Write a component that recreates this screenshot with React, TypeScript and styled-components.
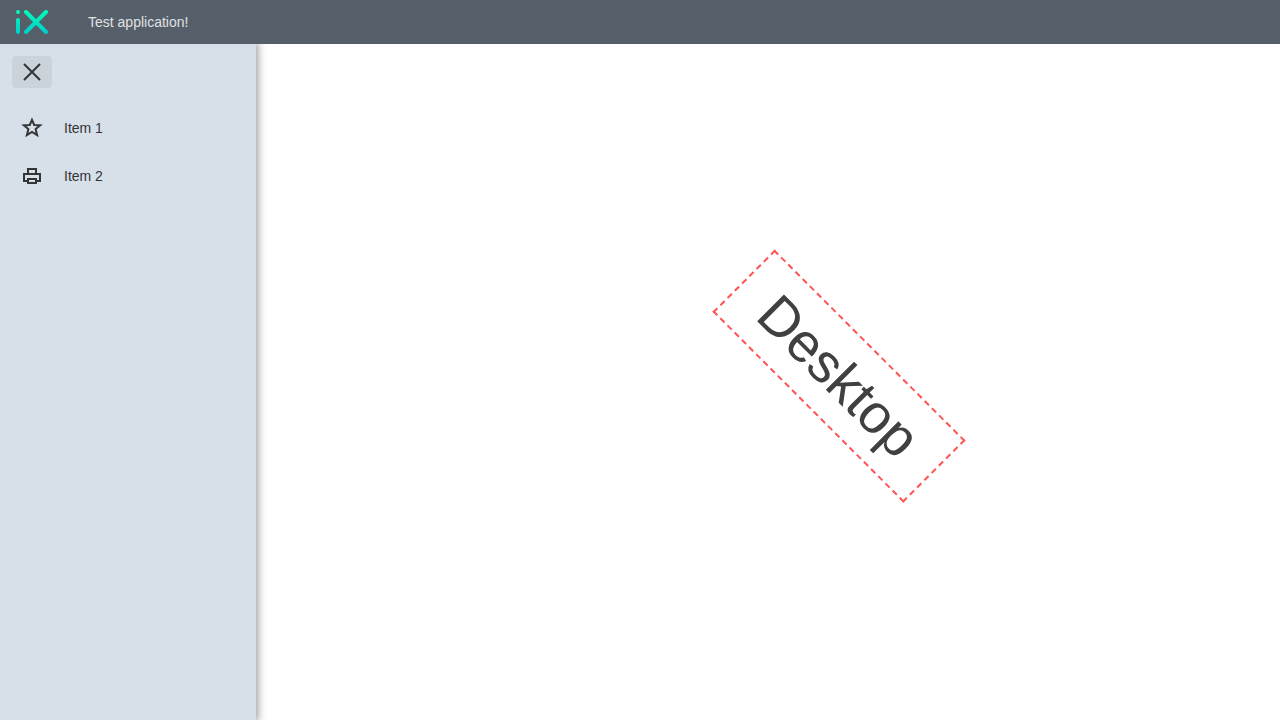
import React from 'react';
import styled, { createGlobalStyle } from 'styled-components';

const GlobalStyle = createGlobalStyle`
  * { box-sizing: border-box; }
  body {
    margin: 0;
    background: #ffffff;
    color: #333537;
    font-family: Arial, "Liberation Sans", sans-serif;
    font-size: 14px;
    line-height: 20px;
  }
`;

const Page = styled.div`
  display: flex;
  flex-direction: column;
  min-height: 100vh;
`;

const Header = styled.header`
  display: flex;
  align-items: center;
  gap: 40px;
  height: 44px;
  padding: 0 16px;
  background: #555f69;
  color: #e0e2e4;
  z-index: 2;
`;

const Title = styled.div`
  font-size: 14px;
`;

const Body = styled.div`
  display: flex;
  flex: 1;
`;

const Menu = styled.nav`
  flex: none;
  width: 256px;
  padding: 12px 0;
  background: #d7dfe8;
  box-shadow: 0 0 8px 2px rgba(0, 0, 0, 0.4);
  z-index: 1;
`;

const CloseButton = styled.button`
  display: flex;
  align-items: center;
  justify-content: center;
  width: 40px;
  height: 32px;
  margin: 0 12px 16px;
  padding: 0;
  border: 0;
  border-radius: 4px;
  background: #cad3da;
  color: inherit;
`;

const MenuItem = styled.button`
  display: flex;
  align-items: center;
  gap: 20px;
  width: 100%;
  height: 48px;
  padding: 0 20px;
  border: 0;
  background: transparent;
  color: inherit;
  font: inherit;
  text-align: left;
`;

const Content = styled.main`
  display: flex;
  flex: 1;
  align-items: center;
  justify-content: center;
  padding: 0 0 12px 142px;
`;

const Stamp = styled.div`
  padding: 32px;
  border: 2px dashed #ff5454;
  color: #404040;
  font-size: 55px;
  line-height: 20px;
  transform: rotate(45deg);
`;

const Logo = () => (
  <svg width="32" height="24" viewBox="0 0 32 24" role="img" aria-label="iX">
    <defs>
      <linearGradient id="logo" gradientUnits="userSpaceOnUse" x1="0" y1="0" x2="0" y2="24">
        <stop offset="0" stopColor="#00ffb9" />
        <stop offset="1" stopColor="#00cccc" />
      </linearGradient>
    </defs>
    <circle cx="2" cy="2" r="2" fill="url(#logo)" />
    <rect x="0" y="8" width="4" height="16" rx="2" fill="url(#logo)" />
    <path d="M10 2L30 22M30 2L10 22" stroke="url(#logo)" strokeWidth="4" strokeLinecap="round" />
  </svg>
);

const Icon = ({ children }: { children: React.ReactNode }) => (
  <svg width="24" height="24" viewBox="0 0 24 24" fill="none" stroke="currentColor" strokeWidth="2" aria-hidden="true">
    {children}
  </svg>
);

export default function App() {
  return (
    <Page>
      <GlobalStyle />
      <Header>
        <Logo />
        <Title>Test application!</Title>
      </Header>
      <Body>
        <Menu>
          <CloseButton type="button" aria-label="Close menu">
            <Icon>
              <path d="M4 4L20 20M20 4L4 20" />
            </Icon>
          </CloseButton>
          <MenuItem type="button">
            <Icon>
              <path d="M12 3.8L14.2 9L20.2 9.3L15.6 13.1L17.1 19L12 15.9L6.9 19L8.4 13.1L3.8 9.3L9.8 9Z" />
            </Icon>
            Item 1
          </MenuItem>
          <MenuItem type="button">
            <Icon>
              <path d="M8 10V5H16V10M8 17H4V10H20V17H16M8 15H16V19H8Z" />
            </Icon>
            Item 2
          </MenuItem>
        </Menu>
        <Content>
          <Stamp>Desktop</Stamp>
        </Content>
      </Body>
    </Page>
  );
}
